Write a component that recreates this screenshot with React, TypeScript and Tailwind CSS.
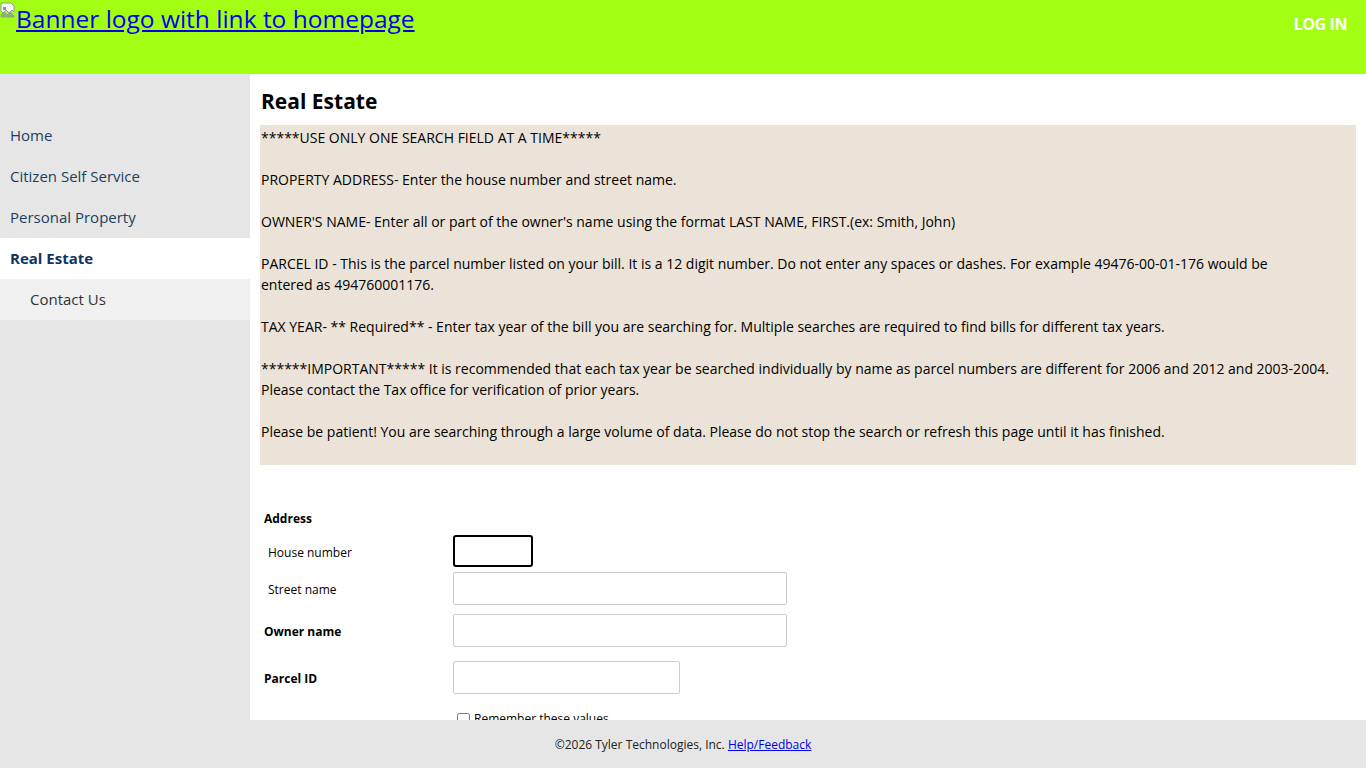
import React from "react";

const font = { fontFamily: '"Open Sans", "Noto Sans", sans-serif' };

const navItems = [
  { label: "Home" },
  { label: "Citizen Self Service" },
  { label: "Personal Property" },
  { label: "Real Estate", active: true },
  { label: "Contact Us", sub: true },
];

function BrokenImage() {
  return (
    <svg width="16" height="16" viewBox="0 0 16 16" className="shrink-0">
      <path d="M1 1h10l3 3v6l-2-2-3 3-3-3-3 3-2-2z" fill="#f4f4f4" stroke="#9a9a9a" strokeWidth="1" />
      <path d="M3 5h3v3H3z" fill="#5b9bd5" />
      <path d="M1 13l3-3 3 3 3-3 4 4v1H1z" fill="#7cbf5a" stroke="#9a9a9a" strokeWidth="1" />
    </svg>
  );
}

export default function App() {
  return (
    <div className="h-screen flex flex-col overflow-hidden text-black" style={font}>
      {/* Header */}
      <header className="h-[74px] shrink-0 bg-[#a2ff14] flex justify-between items-start">
        <a href="#" className="flex items-start text-[#0000ee] underline text-[24.5px] leading-[34px] mt-[2px]">
          <BrokenImage />
          <span>Banner logo with link to homepage</span>
        </a>
        <a href="#" className="text-white font-bold text-[16px] mt-[12px] mr-[19px] tracking-tight">LOG IN</a>
      </header>

      <div className="flex flex-1 min-h-0">
        {/* Sidebar */}
        <nav className="w-[250px] shrink-0 bg-[#e6e6e6] pt-[41px]">
          {navItems.map((item) => (
            <div
              key={item.label}
              className={`h-[41px] flex items-center text-[15px] ${
                item.active
                  ? "bg-white font-bold text-[#0f3462] pl-[10px]"
                  : item.sub
                  ? "bg-[#f0f0f0] text-[#333] pl-[30px]"
                  : "text-[#1c3f5e] pl-[10px]"
              }`}
            >
              {item.label}
            </div>
          ))}
        </nav>

        {/* Main */}
        <main className="flex-1 min-w-0 overflow-hidden pl-[10px] pr-[10px]">
          <h1 className="text-[21px] font-bold leading-[28px] mt-[13px] mb-[10px] pl-[1px]">Real Estate</h1>
          <div className="bg-[#ebe3d7] text-[14px] leading-[21px] pl-[1px] pt-[2px] pb-[2px]">
            *****USE ONLY ONE SEARCH FIELD AT A TIME*****<br /><br />
            PROPERTY ADDRESS- Enter the house number and street name.<br /><br />
            OWNER'S NAME- Enter all or part of the owner's name using the format LAST NAME, FIRST.(ex: Smith, John)<br /><br />
            PARCEL ID - This is the parcel number listed on your bill. It is a 12 digit number. Do not enter any spaces or dashes. For example 49476-00-01-176 would be<br />
            entered as 494760001176.<br /><br />
            TAX YEAR- ** Required** - Enter tax year of the bill you are searching for. Multiple searches are required to find bills for different tax years.<br /><br />
            ******IMPORTANT***** It is recommended that each tax year be searched individually by name as parcel numbers are different for 2006 and 2012 and 2003-2004.<br />
            Please contact the Tax office for verification of prior years.<br /><br />
            Please be patient! You are searching through a large volume of data. Please do not stop the search or refresh this page until it has finished.<br /><br />
          </div>

          <div className="mt-[44px] pl-[4px] text-[12px]">
            <div className="font-bold h-[20px] flex items-center">Address</div>
            <div className="flex items-center mt-[6px] h-[32px]">
              <span className="w-[189px] pl-[4px] pt-[3px]">House number</span>
              <input className="w-[80px] h-[32px] border-2 border-black rounded-[3px] outline-none" />
            </div>
            <div className="flex items-center mt-[5px] h-[33px]">
              <span className="w-[189px] pl-[4px] pt-[3px]">Street name</span>
              <input className="w-[334px] h-[33px] border border-[#ccc] rounded-[2px] outline-none" />
            </div>
            <div className="flex items-center mt-[9px] h-[33px]">
              <span className="w-[189px] font-bold pt-[3px]">Owner name</span>
              <input className="w-[334px] h-[33px] border border-[#ccc] rounded-[2px] outline-none" />
            </div>
            <div className="flex items-center mt-[14px] h-[33px]">
              <span className="w-[189px] font-bold pt-[3px]">Parcel ID</span>
              <input className="w-[227px] h-[33px] border border-[#ccc] rounded-[2px] outline-none" />
            </div>
            <div className="flex items-center mt-[16px] pl-[193px] gap-[4px]">
              <input type="checkbox" className="w-[13px] h-[13px]" />
              <span>Remember these values</span>
            </div>
          </div>
        </main>
      </div>

      {/* Footer */}
      <footer className="h-[48px] shrink-0 bg-[#e6e6e6] flex items-center justify-center text-[12px] text-[#222] pt-[1px]">
        ©2026 Tyler Technologies, Inc.&nbsp;<a href="#" className="text-[#0000ee] underline">Help/Feedback</a>
      </footer>
    </div>
  );
}
